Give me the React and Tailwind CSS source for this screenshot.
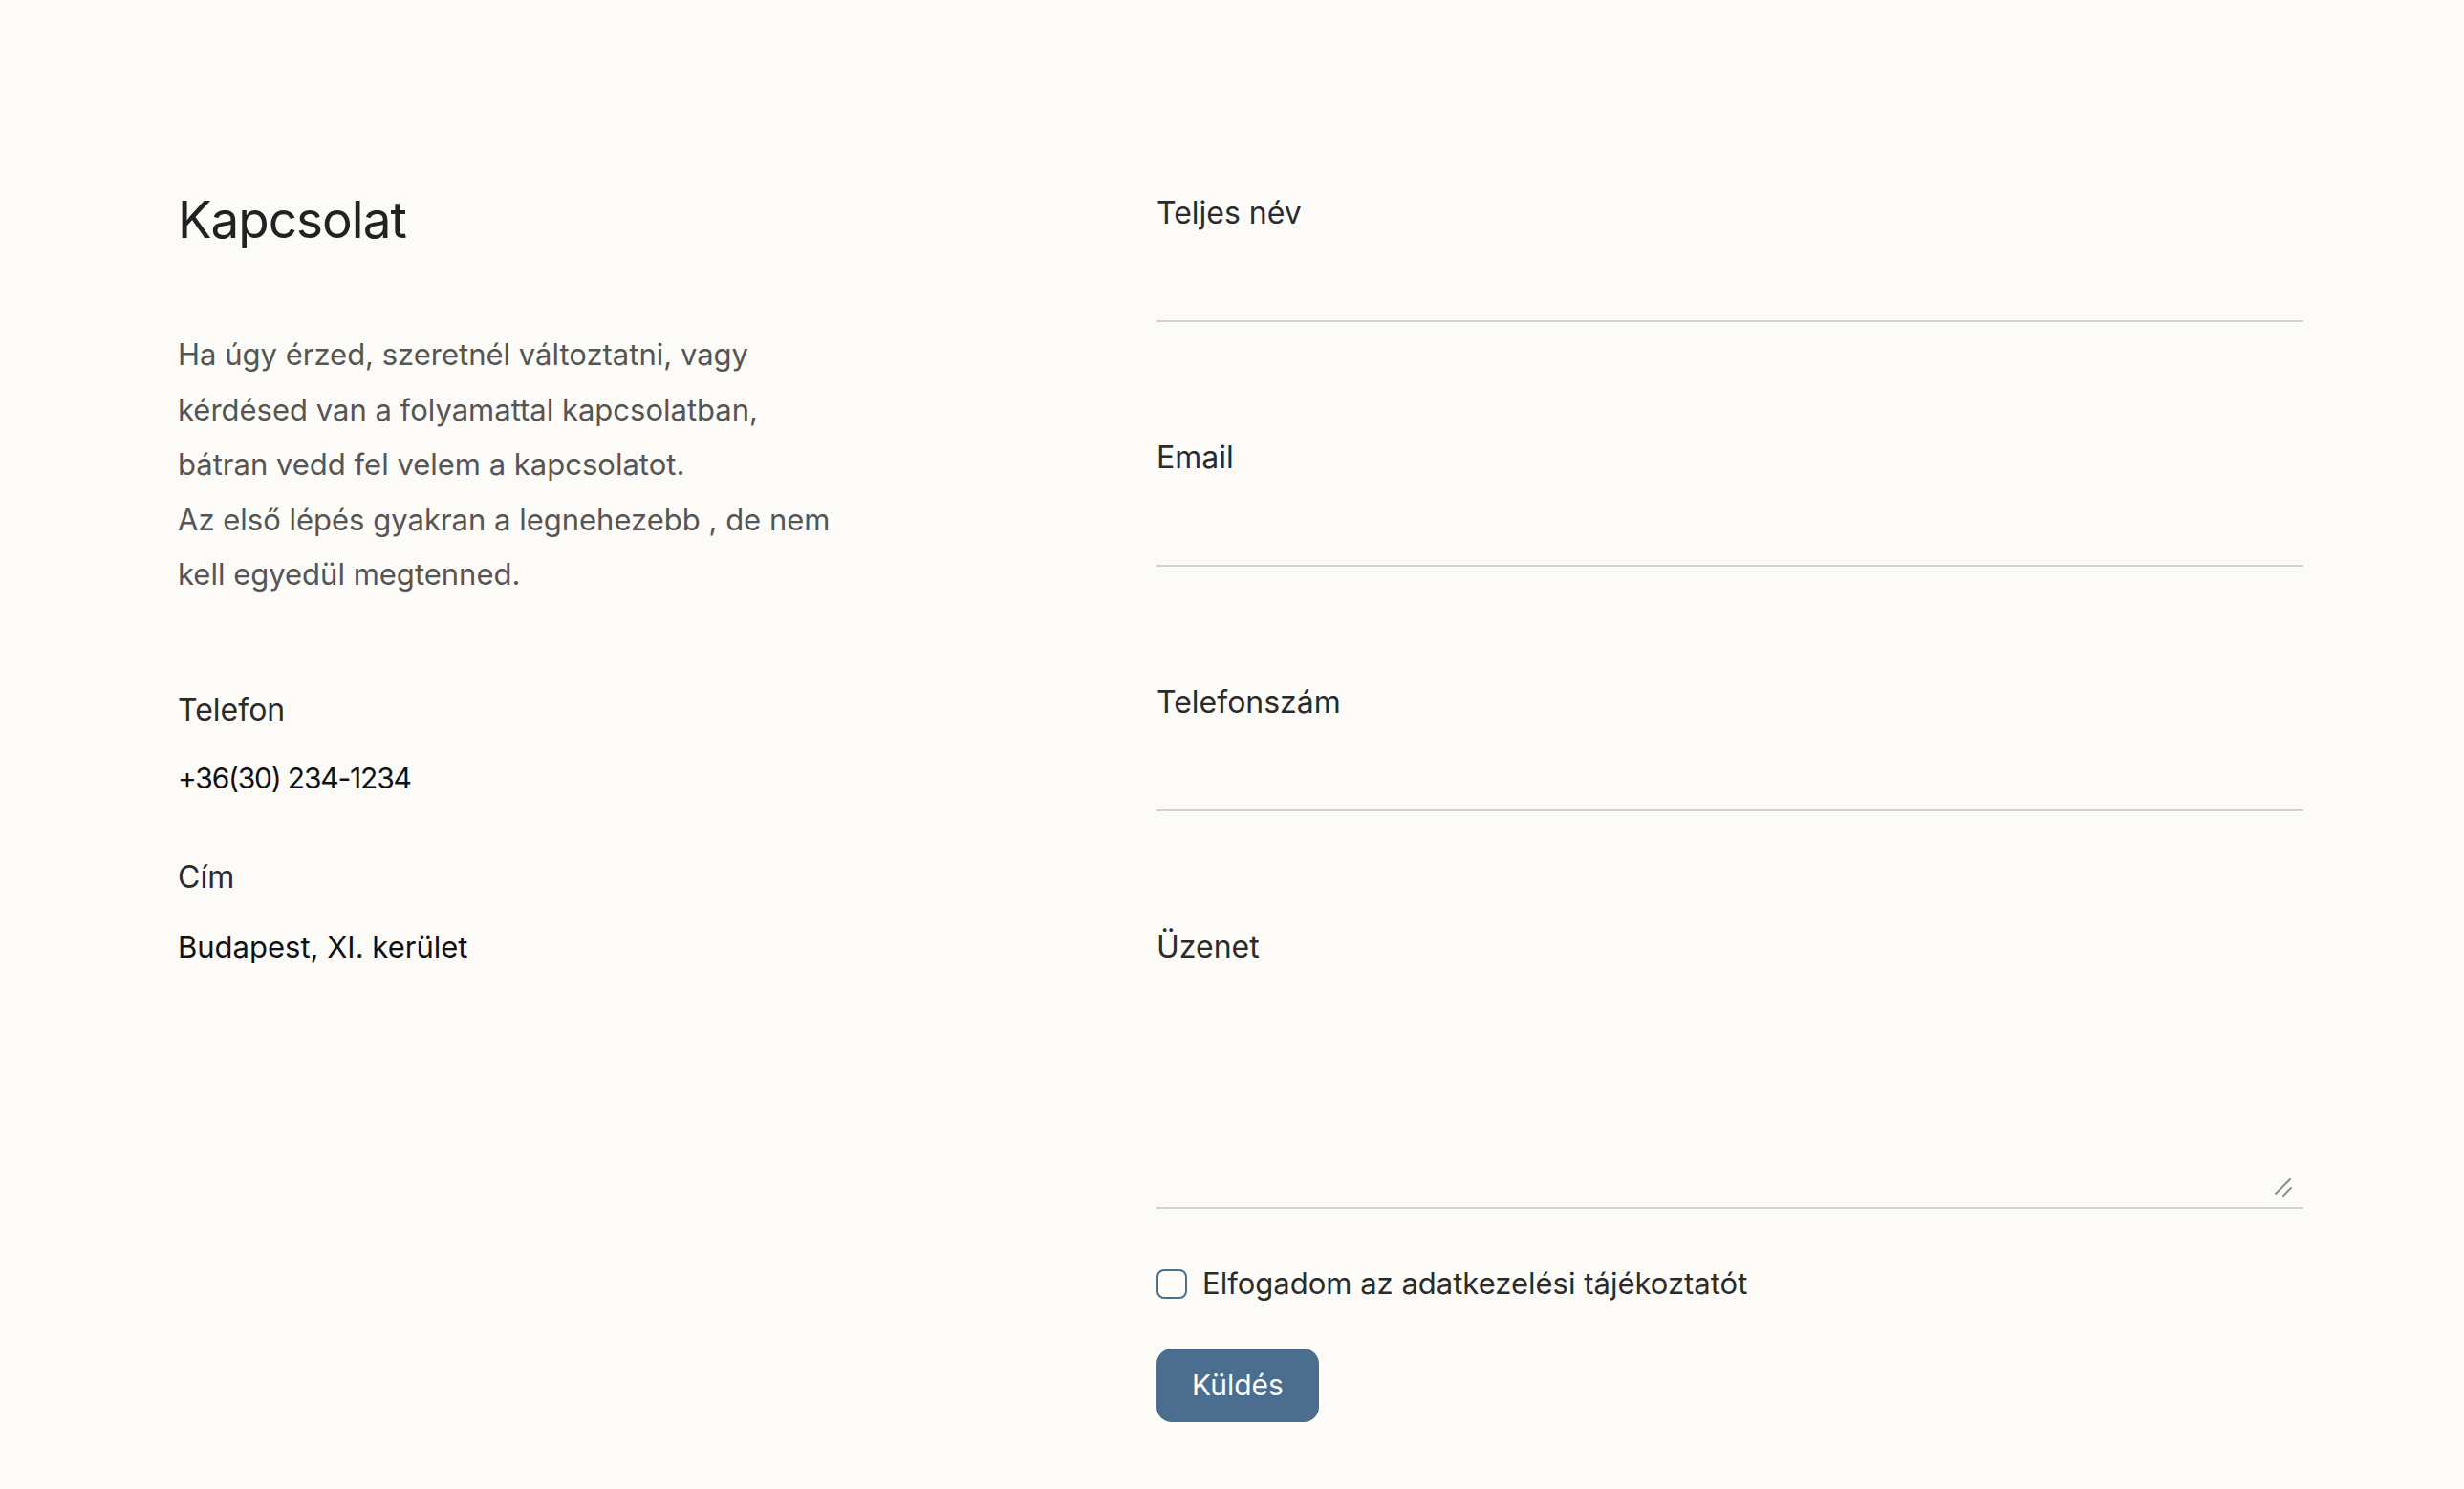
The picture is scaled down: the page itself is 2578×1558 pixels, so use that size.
import React, { useState } from "react";

const fields = [
  { id: "name", label: "Teljes név", type: "text" },
  { id: "email", label: "Email", type: "email" },
  { id: "phone", label: "Telefonszám", type: "tel" },
];

const Field = ({ id, label, type }) => (
  <div className="flex flex-col">
    <label htmlFor={id} className="text-[32px] leading-[40px] text-[#2b2b2b]">
      {label}
    </label>
    <input
      id={id}
      type={type}
      className="mt-3 h-[82px] w-full border-0 border-b-2 border-[#d0d2cd] bg-transparent text-[30px] text-[#222] outline-none"
    />
  </div>
);

export default function App() {
  const [agreed, setAgreed] = useState(false);

  return (
    <div
      className="min-h-screen bg-[#fcfbf8] text-[#222]"
      style={{ fontFamily: "Inter, 'Noto Sans', sans-serif" }}
    >
      <div className="flex pl-[186px] pr-[168px] pt-[203px] pb-[70px]">
        {/* Left: info */}
        <div className="w-[1024px] shrink-0">
          <h1 className="text-[53px] leading-[55px] font-normal tracking-[-1px] text-[#222]">
            Kapcsolat
          </h1>
          <p className="mt-[84px] text-[31px] leading-[57.5px] text-[#555]">
            Ha úgy érzed, szeretnél változtatni, vagy
            <br />
            kérdésed van a folyamattal kapcsolatban,
            <br />
            bátran vedd fel velem a kapcsolatot.
            <br />
            Az első lépés gyakran a legnehezebb , de nem
            <br />
            kell egyedül megtenned.
          </p>

          <div className="mt-[89px]">
            <div className="text-[32px] leading-[48px] text-[#2b2b2b]">Telefon</div>
            <div className="mt-[25px] text-[30px] leading-[45px] tracking-[-1.2px] text-[#111]">
              +36(30) 234-1234
            </div>
          </div>
          <div className="mt-[57px]">
            <div className="text-[32px] leading-[48px] text-[#2b2b2b]">Cím</div>
            <div className="mt-[26px] text-[31px] leading-[45px] text-[#111]">
              Budapest, XI. kerület
            </div>
          </div>
        </div>

        {/* Right: form */}
        <form className="flex-1" onSubmit={(e) => e.preventDefault()}>
          <div className="flex flex-col gap-[122px]">
            {fields.map((f) => (
              <Field key={f.id} {...f} />
            ))}
            <div className="flex flex-col">
              <label htmlFor="msg" className="text-[32px] leading-[40px] text-[#2b2b2b]">
                Üzenet
              </label>
              <div className="relative mt-3">
                <textarea
                  id="msg"
                  className="block h-[242px] w-full resize-none border-0 border-b-2 border-[#d0d2cd] bg-transparent text-[30px] text-[#222] outline-none"
                />
                {/* resize grip */}
                <svg
                  className="pointer-events-none absolute right-[10px] bottom-[12px]"
                  width="20"
                  height="20"
                  viewBox="0 0 20 20"
                  fill="none"
                  stroke="#8c8c8c"
                  strokeWidth="2"
                  strokeLinecap="round"
                >
                  <path d="M16 1 L1 16" />
                  <path d="M17 10 L9 18" />
                </svg>
              </div>
            </div>
          </div>

          <label className="mt-[58px] flex items-center gap-4 cursor-pointer">
            <input
              type="checkbox"
              checked={agreed}
              onChange={(e) => setAgreed(e.target.checked)}
              className="h-[31px] w-[32px] appearance-none rounded-[8px] border-2 border-[#4b6e8d] bg-transparent checked:bg-[#4b6e8d]"
            />
            <span className="text-[31px] leading-[40px] text-[#2b2b2b]">
              Elfogadom az adatkezelési tájékoztatót
            </span>
          </label>

          <button
            type="submit"
            className="mt-[48px] h-[77px] rounded-[16px] bg-[#4b6e8e] px-[37px] text-[30px] text-white"
          >
            Küldés
          </button>
        </form>
      </div>
    </div>
  );
}
